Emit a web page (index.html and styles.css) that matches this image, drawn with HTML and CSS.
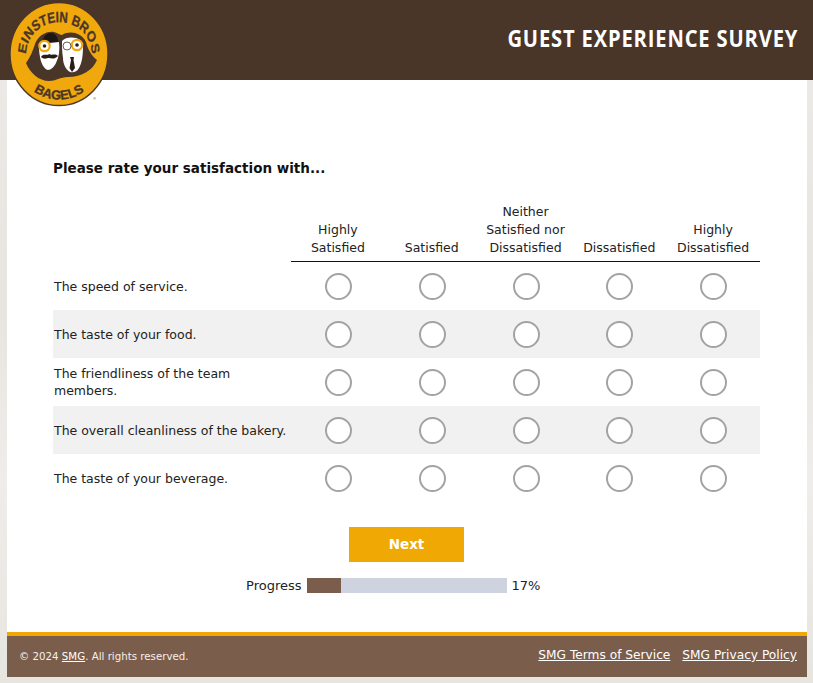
FILE: index.html
```html
<!DOCTYPE html>
<html lang="en">
<head>
<meta charset="utf-8">
<title>Guest Experience Survey</title>
<link rel="stylesheet" href="styles.css">
</head>
<body>
<header class="site-header">
  <svg class="logo" viewBox="9 0 102 108" width="102" height="108" aria-label="Einstein Bros Bagels">
    <defs>
      <path id="arc-top" d="M -41.300 60 A 42 32 0 1 1 41.300 60"/>
      <path id="arc-bottom" d="M 14 53 A 45 46.500 0 0 0 104 53"/>
    </defs>
    <ellipse class="logo-disc" cx="59" cy="54" rx="49" ry="51.500"/>
    <path class="logo-hair" d="M 26 63 C 31 56 33 50 35 44 C 38 36 46 31 54 32 C 58 33 60 35 62 35 C 70 30 82 33 86 42 C 88 50 92 56 97 60 C 93 70 82 77 68 77 C 60 77 56 81 49 81 C 39 81 30 73 26 63 Z"/>
    <path class="logo-hat" d="M 43 41 C 43 36 47 33 51 33 C 55 33 58 37 58 41 C 60 42 60 43 58 44 L 40 44 C 39 43 41 42 43 41 Z"/>
    <path class="logo-face" d="M 39 44 L 59 42 C 60 50 59 57 56 63 C 54 67 51 70 48 70 C 44 69 41 63 40 57 C 39 52 39 48 39 44 Z"/>
    <path class="logo-mark" d="M 41 57 C 43 53 47 56 49 54 C 52 56 55 53 58 56 C 54 60 51 58 49 58 C 47 58 44 60 41 57 Z"/>
    <path class="logo-face" d="M 62 41 C 65 37 72 37 76 38 C 80 39 83 42 83 47 C 83 55 82 63 79 68 C 77 72 73 73 70 72 C 66 70 63 64 63 58 C 62 52 62 46 62 41 Z"/>
    <path class="logo-mark" d="M 70 57 L 74 57 L 73.5 60 L 75 68 L 72 72 L 69.500 68 L 71 60 Z"/>
    <circle class="logo-lens" cx="44.500" cy="46" r="5.200"/>
    <circle class="logo-pupil" cx="44.500" cy="46" r="1.800"/>
    <circle class="logo-lens" cx="77" cy="45" r="5.200"/>
    <circle class="logo-pupil" cx="77" cy="45" r="1.800"/>
    <circle class="logo-lens-thin" cx="67" cy="46" r="4"/>
    <g transform="translate(59 0) scale(0.78 1)">
      <text class="logo-text"><textPath href="#arc-top" startOffset="50%" text-anchor="middle">EINSTEIN BROS</textPath></text>
    </g>
    <text class="logo-text logo-text-small"><textPath href="#arc-bottom" startOffset="50%" text-anchor="middle">BAGELS</textPath></text>
    <text class="logo-tm" x="93" y="100">®</text>
  </svg>
  <h1 class="site-title">GUEST EXPERIENCE SURVEY</h1>
</header>

<main class="page">
  <h2 class="prompt">Please rate your satisfaction with...</h2>
  <table class="matrix">
    <thead>
      <tr>
        <th class="label-col"></th>
        <th>Highly Satisfied</th>
        <th>Satisfied</th>
        <th>Neither Satisfied nor Dissatisfied</th>
        <th>Dissatisfied</th>
        <th>Highly Dissatisfied</th>
      </tr>
    </thead>
    <tbody>
      <tr>
        <td class="label-col">The speed of service.</td>
        <td><input class="radio" type="radio" name="q1"></td>
        <td><input class="radio" type="radio" name="q1"></td>
        <td><input class="radio" type="radio" name="q1"></td>
        <td><input class="radio" type="radio" name="q1"></td>
        <td><input class="radio" type="radio" name="q1"></td>
      </tr>
      <tr class="alt">
        <td class="label-col">The taste of your food.</td>
        <td><input class="radio" type="radio" name="q2"></td>
        <td><input class="radio" type="radio" name="q2"></td>
        <td><input class="radio" type="radio" name="q2"></td>
        <td><input class="radio" type="radio" name="q2"></td>
        <td><input class="radio" type="radio" name="q2"></td>
      </tr>
      <tr>
        <td class="label-col">The friendliness of the team members.</td>
        <td><input class="radio" type="radio" name="q3"></td>
        <td><input class="radio" type="radio" name="q3"></td>
        <td><input class="radio" type="radio" name="q3"></td>
        <td><input class="radio" type="radio" name="q3"></td>
        <td><input class="radio" type="radio" name="q3"></td>
      </tr>
      <tr class="alt">
        <td class="label-col">The overall cleanliness of the bakery.</td>
        <td><input class="radio" type="radio" name="q4"></td>
        <td><input class="radio" type="radio" name="q4"></td>
        <td><input class="radio" type="radio" name="q4"></td>
        <td><input class="radio" type="radio" name="q4"></td>
        <td><input class="radio" type="radio" name="q4"></td>
      </tr>
      <tr>
        <td class="label-col">The taste of your beverage.</td>
        <td><input class="radio" type="radio" name="q5"></td>
        <td><input class="radio" type="radio" name="q5"></td>
        <td><input class="radio" type="radio" name="q5"></td>
        <td><input class="radio" type="radio" name="q5"></td>
        <td><input class="radio" type="radio" name="q5"></td>
      </tr>
    </tbody>
  </table>

  <div class="actions"><button class="next" type="button">Next</button></div>

  <div class="progress">
    <span class="progress-label">Progress</span>
    <div class="progress-track"><div class="progress-fill" style="width:17%"></div></div>
    <span>17%</span>
  </div>
</main>

<footer class="site-footer">
  <div class="copyright">© 2024 <a href="#">SMG</a>. All rights reserved.</div>
  <nav class="legal">
    <a href="#">SMG Terms of Service</a>
    <a href="#">SMG Privacy Policy</a>
  </nav>
</footer>
</body>
</html>
```

FILE: styles.css
```css
* { box-sizing: border-box; }

html, body { margin: 0; padding: 0; }

body {
  height: 683px;
  overflow: hidden;
  background: #e9e8e3 linear-gradient(180deg, #ecebe7, #e6e5e0 45%, #eeede9 70%, #e6e5e0);
  font-family: "DejaVu Sans", Verdana, sans-serif;
  font-size: 12.5px;
  color: #222;
}

.site-header {
  position: relative;
  height: 80px;
  background: #4a3529;
  display: flex;
  justify-content: flex-end;
  align-items: center;
  padding-right: 15px;
}

.logo {
  position: absolute;
  left: 9px;
  top: 0;
  z-index: 2;
}

.logo-disc { fill: #f0a80c; stroke: #4a3529; stroke-width: 1.4; }
.logo-hair { fill: #4a3529; }
.logo-hat { fill: #1d1613; }
.logo-face { fill: #fff; }
.logo-mark { fill: #2a1d16; }
.logo-lens { fill: #fff; stroke: #f0a80c; stroke-width: 2.2; }
.logo-lens-thin { fill: #fff; stroke: #4a3529; stroke-width: 0.8; }
.logo-pupil { fill: #2a1d16; }

.logo-text {
  font-family: "Liberation Sans", sans-serif;
  font-weight: 700;
  font-size: 15px;
  fill: #4a3529;
  stroke: #4a3529;
  stroke-width: 0.3;
}

.logo-text-small { font-size: 13px; }

.logo-tm {
  font-family: "Liberation Sans", sans-serif;
  font-size: 4px;
  fill: #4a3529;
}

.site-title {
  margin: 0 0 6px;
  font-family: "Open Sans", sans-serif;
  font-weight: 700;
  font-size: 24px;
  letter-spacing: 1px;
  color: #fff;
  transform: scaleX(0.84);
  transform-origin: right center;
}

.page {
  width: 800px;
  height: 552px;
  margin-left: 7px;
  background: #fff;
  padding: 79px 47px 0 46px;
}

.prompt {
  margin: 0 0 26px;
  font-size: 13.5px;
  line-height: 18px;
  font-weight: 700;
  color: #111;
}

.matrix {
  width: 707px;
  border-collapse: collapse;
  table-layout: fixed;
}

.matrix th {
  font-weight: 400;
  vertical-align: bottom;
  text-align: center;
  line-height: 18px;
  padding: 0 4px 4px;
  border-bottom: 1px solid #111;
}

.matrix th.label-col {
  border-bottom: 0;
}

.matrix td {
  height: 48px;
  padding: 1px 0 0 1.2px;
  text-align: center;
  vertical-align: middle;
}

.matrix .label-col {
  width: 238px;
}

.matrix td.label-col {
  text-align: left;
  padding: 1px 1px 0;
  line-height: 17px;
}

.alt td { background: #f1f1f1; }

.radio {
  appearance: none;
  display: block;
  width: 27px;
  height: 27px;
  margin: 0 auto;
  border: 2px solid #a3a3a3;
  border-radius: 50%;
  background: #fff;
}

.actions {
  display: flex;
  justify-content: center;
  margin-top: 25px;
}

.next {
  width: 115px;
  height: 35px;
  border: 0;
  padding: 0;
  background: #efa804;
  color: #fff;
  font-family: inherit;
  font-size: 13.5px;
  font-weight: 700;
}

.progress {
  display: grid;
  grid-template-columns: 1fr 200px 1fr;
  align-items: center;
  gap: 5px;
  margin-top: 16px;
  height: 15px;
  font-size: 13px;
}

.progress-label { text-align: right; }

.progress-track {
  height: 15px;
  background: #cfd3df;
}

.progress-fill {
  height: 100%;
  background: #7a5d4b;
}

.site-footer {
  width: 800px;
  height: 45px;
  margin-left: 7px;
  background: #7a5d4b;
  border-top: 4px solid #efa804;
  display: flex;
  justify-content: space-between;
  align-items: center;
  padding: 0 10px 3px 12px;
  color: #f5f1ec;
}

.site-footer a { color: #fff; }

.copyright {
  font-size: 10.25px;
  padding-top: 2px;
}

.legal {
  display: flex;
  gap: 12px;
  font-size: 12.2px;
}
```
